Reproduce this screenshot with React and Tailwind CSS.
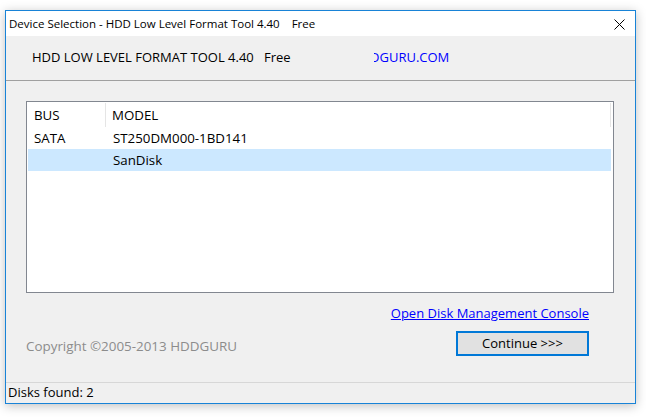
import React from 'react';

const rows = [
  { bus: 'SATA', model: 'ST250DM000-1BD141', selected: false },
  { bus: '', model: 'SanDisk', selected: true },
];

export default function App() {
  return (
    <div className="w-[646px] h-[417px] bg-white pt-[10px] pl-[5px] font-['Open_Sans','Noto_Sans',sans-serif]">
      {/* Dialog window */}
      <div className="w-[631px] h-[394px] border border-[#1883d7] bg-[#f0f0f0] flex flex-col shadow-[0_2px_10px_rgba(0,0,0,0.25)]">
        {/* Title bar */}
        <div className="h-[25px] bg-white flex items-center justify-between pl-[3px] pr-[10px] text-[11.5px] text-black">
          <span className="whitespace-pre">Device Selection - HDD Low Level Format Tool 4.40    Free</span>
          <svg width="11" height="11" viewBox="0 0 11 11" className="mt-[2px]">
            <path d="M0.5 0.5L10.5 10.5M10.5 0.5L0.5 10.5" stroke="#000" strokeWidth="1" />
          </svg>
        </div>

        {/* Header */}
        <div className="h-[45px] border-b border-[#a0a0a0] flex items-center text-[13px] text-black">
          <span className="ml-[26px] w-[342px] whitespace-pre">HDD LOW LEVEL FORMAT TOOL 4.40   Free</span>
          <span className="overflow-hidden whitespace-nowrap w-[90px]">
            <span className="inline-block ml-[-23px] text-[#0000ff]">HDDGURU.COM</span>
          </span>
        </div>

        {/* Device list */}
        <div className="mt-[20px] ml-[20px] w-[588px] h-[192px] border border-[#828790] bg-white text-[13.3px] text-black p-[1px]">
          <div className="h-[24px] flex items-stretch border-r border-[#e5e5e5] mr-[1px]">
            <div className="w-[78px] border-r border-[#e5e5e5] pl-[6px] flex items-center pt-[1px]">BUS</div>
            <div className="pl-[6px] flex items-center pt-[1px]">MODEL</div>
          </div>
          {rows.map((r, i) => (
            <div
              key={i}
              className={`h-[22px] flex items-center pt-[1px] ${r.selected ? 'bg-[#cce8ff]' : ''} mr-[1px]`}
            >
              <div className="w-[78px] pl-[6px]">{r.bus}</div>
              <div className="pl-[7px]">{r.model}</div>
            </div>
          ))}
        </div>

        {/* Actions */}
        <div className="flex flex-col items-end pr-[46px] mt-[12px]">
          <a href="#" className="text-[13px] text-[#0000ff] underline leading-[16px]">
            Open Disk Management Console
          </a>
        </div>
        <div className="flex items-center justify-between pl-[20px] pr-[46px] mt-[10px]">
          <span className="text-[13.4px] text-[#8c8c8c] mt-[5px]">Copyright ©2005-2013 HDDGURU</span>
          <button className="w-[133px] h-[25px] border-2 border-[#0078d7] bg-[#e1e1e1] text-[13px] text-black flex items-center justify-center">
            Continue &gt;&gt;&gt;
          </button>
        </div>

        {/* Status bar */}
        <div className="mt-auto h-[21px] border-t border-[#d7d7d7] flex items-center pl-[2px] text-[13px] text-black">
          Disks found: 2
        </div>
      </div>
    </div>
  );
}
